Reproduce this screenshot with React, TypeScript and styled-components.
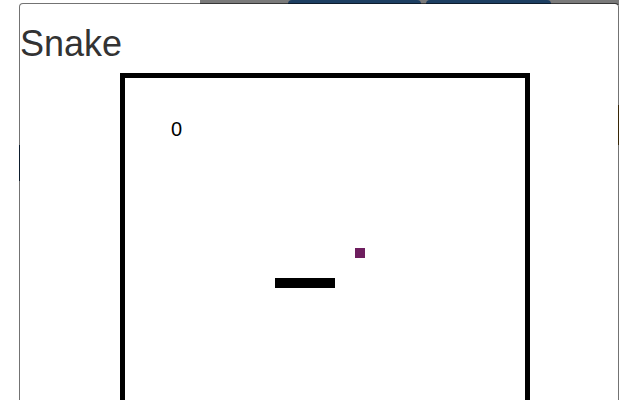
import React from "react";
import styled, { createGlobalStyle } from "styled-components";

const Global = createGlobalStyle`
  html, body { margin: 0; padding: 0; background: #fff; }
  body { width: 640px; height: 400px; overflow: hidden; font-family: "Liberation Sans", Arial, sans-serif; }
`;

const Desktop = styled.div`
  position: relative;
  width: 640px;
  height: 400px;
  overflow: hidden;
  background: #fff;
  padding: 3px 0 0 19px;
  box-sizing: border-box;
`;

const Backdrop = styled.div`
  position: absolute;
  inset: 0;
  z-index: 0;
`;

const TabBar = styled.div`
  position: absolute;
  left: 200px;
  top: 0;
  width: 419px;
  height: 5px;
  display: flex;
  gap: 5px;
  padding-left: 88px;
  box-sizing: border-box;
  background: #7a7a7a;
`;

const Tab = styled.div<{ $width: number }>`
  width: ${(p) => p.$width}px;
  height: 30px;
  background: #1d3f62;
  border-radius: 4px 4px 0 0;
`;

const SideBlock = styled.div<{ $left: number; $top: number; $h: number; $color: string }>`
  position: absolute;
  left: ${(p) => p.$left}px;
  top: ${(p) => p.$top}px;
  width: 28px;
  height: ${(p) => p.$h}px;
  background: ${(p) => p.$color};
`;

const Window = styled.section`
  position: relative;
  z-index: 1;
  width: 598px;
  height: 420px;
  background: #fff;
  border: 1px solid rgba(0, 0, 0, 0.55);
  border-radius: 4px 4px 0 0;
  background-clip: padding-box;
  display: flex;
  flex-direction: column;
  align-items: flex-start;
`;

const Title = styled.h1`
  margin: 20px 0 9px;
  font-family: "Liberation Sans", Arial, sans-serif;
  font-size: 36px;
  font-weight: 500;
  line-height: 1.1;
  color: #333;
`;

const Board = styled.div`
  position: relative;
  margin-left: 100px;
  width: 400px;
  height: 400px;
  flex: none;
  border: 5px solid #000;
`;

const Score = styled.span`
  position: absolute;
  left: 46px;
  top: 41px;
  font-family: "Liberation Sans", Arial, sans-serif;
  font-size: 20px;
  line-height: 20px;
  color: #000;
`;

const SnakeBody = styled.div`
  position: absolute;
  display: flex;
`;

const Segment = styled.div`
  width: 10px;
  height: 10px;
  background: #000;
`;

const Food = styled.div`
  position: absolute;
  width: 10px;
  height: 10px;
  background: #6e1e5e;
`;

const snake = { x: 150, y: 200, length: 6 };
const food = { x: 230, y: 170 };

export default function App() {
  return (
    <>
      <Global />
      <Desktop>
        <Backdrop>
          <TabBar>
            <Tab $width={133} />
            <Tab $width={125} />
          </TabBar>
          <SideBlock $left={19} $top={145} $h={36} $color="#1d3f62" />
          <SideBlock $left={591} $top={105} $h={40} $color="#7a5410" />
        </Backdrop>
        <Window>
          <Title>Snake</Title>
          <Board>
            <Score>0</Score>
            <SnakeBody style={{ left: snake.x, top: snake.y }}>
              {Array.from({ length: snake.length }, (_, i) => (
                <Segment key={i} />
              ))}
            </SnakeBody>
            <Food style={{ left: food.x, top: food.y }} />
          </Board>
        </Window>
      </Desktop>
    </>
  );
}
